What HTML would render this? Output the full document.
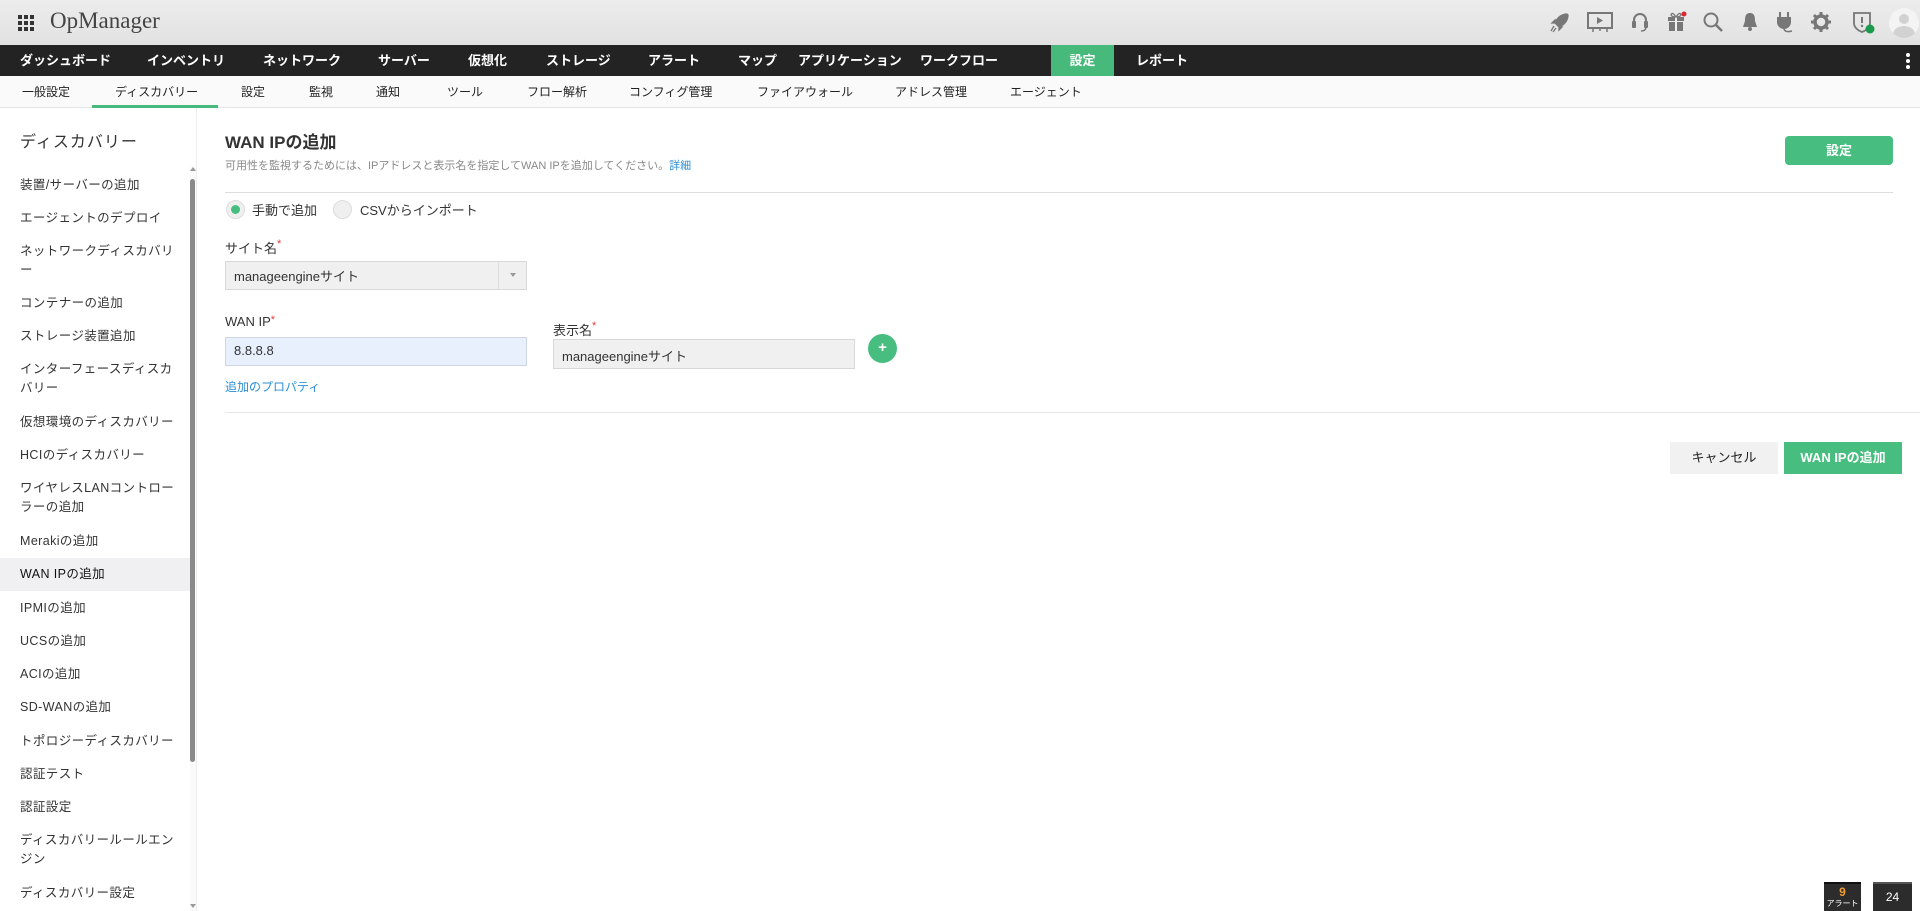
<!DOCTYPE html>
<html><head><meta charset="utf-8"><style>
*{box-sizing:border-box;margin:0;padding:0}
body{width:1920px;height:911px;overflow:hidden;background:#fff;font-family:"Liberation Sans","Noto Sans CJK JP",sans-serif;position:relative;color:#333}
.a{position:absolute;white-space:nowrap}
#hdr{left:0;top:0;width:1920px;height:45px;background:linear-gradient(#ececec,#e2e2e2)}
#nav{left:0;top:45px;width:1920px;height:31px;background:#232323}
#nav span{position:absolute;top:0;line-height:31px;color:#fff;font-size:13px;font-weight:bold}
#sub{left:0;top:76px;width:1920px;height:32px;background:#fafafa;border-bottom:1px solid #e6e6e6}
#sub span{position:absolute;top:0;line-height:32px;font-size:12px;color:#222}
.si{position:absolute;left:20px;font-size:12.5px;letter-spacing:0.4px;color:#333;line-height:19px;white-space:nowrap}
.lbl{font-size:13px;color:#333}
.req{color:#e53b3b;font-size:11px;vertical-align:top}
.ic{position:absolute;top:11px}
</style></head><body>
<div class="a" id="hdr"></div>
<svg class="a" style="left:18px;top:15px" width="16" height="16"><g fill="#333"><rect x="0" y="0" width="4" height="4"/><rect x="6" y="0" width="4" height="4"/><rect x="12" y="0" width="4" height="4"/><rect x="0" y="6" width="4" height="4"/><rect x="6" y="6" width="4" height="4"/><rect x="12" y="6" width="4" height="4"/><rect x="0" y="12" width="4" height="4"/><rect x="6" y="12" width="4" height="4"/><rect x="12" y="12" width="4" height="4"/></g></svg>
<div class="a" style="left:50px;top:8px;font-family:'Liberation Serif',serif;font-size:23px;color:#444">OpManager</div>
<svg class="ic" style="left:1549px" width="22" height="22" viewBox="0 0 22 22"><path d="M18 3 C12 3 8 7 6 12 L10 16 C15 14 19 10 19 4Z M6 12 L3 12 L6 9Z M10 16 L10 19 L13 16Z M5 15 L2 20 M7 17 L4 21" fill="#777" stroke="#777" stroke-width="1.3"/></svg>
<svg class="ic" style="left:1587px" width="26" height="24" viewBox="0 0 26 24"><rect x="1" y="2" width="24" height="15" fill="none" stroke="#777" stroke-width="2"/><path d="M10 6 L16 9.5 L10 13Z" fill="#777"/><path d="M6 17 V21 M20 17 V21 M13 17 V20" stroke="#777" stroke-width="1.5"/></svg>
<svg class="ic" style="left:1630px" width="20" height="22" viewBox="0 0 20 22"><path d="M4 12 V9 A6 6 0 0 1 16 9 V12" fill="none" stroke="#777" stroke-width="2"/><rect x="2" y="10" width="4" height="7" rx="1" fill="#777"/><rect x="14" y="10" width="4" height="7" rx="1" fill="#777"/><path d="M16 17 Q15 20 11 20" fill="none" stroke="#777" stroke-width="1.5"/></svg>
<svg class="ic" style="left:1666px;top:9px" width="22" height="24" viewBox="0 0 22 24"><rect x="2" y="8" width="16" height="4" fill="#777"/><rect x="3" y="13" width="14" height="9" fill="#777"/><path d="M10 8 V22" stroke="#eee" stroke-width="2"/><path d="M10 8 Q6 2 5 6 Q6 8 10 8 Q14 2 15 6 Q14 8 10 8" fill="none" stroke="#777" stroke-width="1.3"/><circle cx="18" cy="5" r="2.5" fill="#e0242b"/></svg>
<svg class="ic" style="left:1702px" width="22" height="22" viewBox="0 0 22 22"><circle cx="9" cy="9" r="6.5" fill="none" stroke="#777" stroke-width="2"/><path d="M14 14 L20 20" stroke="#777" stroke-width="2.5"/></svg>
<svg class="ic" style="left:1740px" width="20" height="22" viewBox="0 0 20 22"><path d="M10 2 C5 2 5 7 5 10 L3 16 H17 L15 10 C15 7 15 2 10 2Z" fill="#777"/><circle cx="10" cy="18" r="2" fill="#777"/></svg>
<svg class="ic" style="left:1774px" width="22" height="24" viewBox="0 0 22 24"><path d="M6 1 V6 M14 1 V6" stroke="#777" stroke-width="2"/><path d="M3 6 H17 V11 A7 7 0 0 1 3 11Z" fill="#777"/><path d="M10 17 Q10 22 18 20" fill="none" stroke="#777" stroke-width="1.5"/></svg>
<svg class="ic" style="left:1810px" width="22" height="22" viewBox="0 0 22 22"><circle cx="11" cy="11" r="6" fill="none" stroke="#777" stroke-width="3.5"/><g stroke="#777" stroke-width="3"><path d="M11 1 V5 M11 17 V21 M1 11 H5 M17 11 H21 M4 4 L7 7 M15 15 L18 18 M18 4 L15 7 M7 15 L4 18"/></g></svg>
<svg class="ic" style="left:1851px;top:10px" width="26" height="26" viewBox="0 0 26 26"><path d="M3 3 H19 V13 C19 18 14 21 11 22 C8 21 3 18 3 13Z" fill="none" stroke="#777" stroke-width="1.8"/><path d="M11 7 V13" stroke="#777" stroke-width="2"/><circle cx="11" cy="16" r="1.2" fill="#777"/><circle cx="19" cy="19" r="4.5" fill="#1a9b4b"/></svg>
<div class="a" style="left:1889px;top:8px;width:30px;height:30px;border-radius:50%;background:#f4f4f4;overflow:hidden"><div class="a" style="left:10px;top:6px;width:10px;height:10px;border-radius:50%;background:#d2d2d2"></div><div class="a" style="left:4px;top:18px;width:22px;height:16px;border-radius:50%;background:#d2d2d2"></div></div>

<div class="a" id="nav">
<span style="left:20px">ダッシュボード</span><span style="left:147px">インベントリ</span><span style="left:263px">ネットワーク</span><span style="left:378px">サーバー</span><span style="left:468px">仮想化</span><span style="left:546px">ストレージ</span><span style="left:648px">アラート</span><span style="left:738px">マップ</span><span style="left:798px">アプリケーション</span><span style="left:920px">ワークフロー</span>
<span style="left:1051px;width:63px;background:#47b97a;text-align:center">設定</span><span style="left:1136px">レポート</span>
<div class="a" style="left:1906px;top:8px;width:4px;height:4px;border-radius:50%;background:#fff"></div><div class="a" style="left:1906px;top:14px;width:4px;height:4px;border-radius:50%;background:#fff"></div><div class="a" style="left:1906px;top:20px;width:4px;height:4px;border-radius:50%;background:#fff"></div>
</div>
<div class="a" id="sub">
<span style="left:22px">一般設定</span><span style="left:115px">ディスカバリー</span><span style="left:241px">設定</span><span style="left:309px">監視</span><span style="left:376px">通知</span><span style="left:447px">ツール</span><span style="left:527px">フロー解析</span><span style="left:629px">コンフィグ管理</span><span style="left:757px">ファイアウォール</span><span style="left:895px">アドレス管理</span><span style="left:1010px">エージェント</span>
<div class="a" style="left:92px;top:29px;width:126px;height:3px;background:#47b97a"></div>
</div>

<div class="a" style="left:20px;top:128px;font-size:16px;letter-spacing:1px;color:#333">ディスカバリー</div>
<div class="a" style="left:0;top:558px;width:190px;height:33px;background:#f0f0f2"></div>
<div class="si" style="top:176px">装置/サーバーの追加</div>
<div class="si" style="top:209px">エージェントのデプロイ</div>
<div class="si" style="top:242px">ネットワークディスカバリ<br>ー</div>
<div class="si" style="top:294px">コンテナーの追加</div>
<div class="si" style="top:327px">ストレージ装置追加</div>
<div class="si" style="top:360px">インターフェースディスカ<br>バリー</div>
<div class="si" style="top:413px">仮想環境のディスカバリー</div>
<div class="si" style="top:446px">HCIのディスカバリー</div>
<div class="si" style="top:479px">ワイヤレスLANコントロー<br>ラーの追加</div>
<div class="si" style="top:532px">Merakiの追加</div>
<div class="si" style="top:565px;color:#111">WAN IPの追加</div>
<div class="si" style="top:599px">IPMIの追加</div>
<div class="si" style="top:632px">UCSの追加</div>
<div class="si" style="top:665px">ACIの追加</div>
<div class="si" style="top:698px">SD-WANの追加</div>
<div class="si" style="top:732px">トポロジーディスカバリー</div>
<div class="si" style="top:765px">認証テスト</div>
<div class="si" style="top:798px">認証設定</div>
<div class="si" style="top:831px">ディスカバリールールエン<br>ジン</div>
<div class="si" style="top:884px">ディスカバリー設定</div>
<div class="a" style="left:190px;top:167px;width:6px;height:744px;background:#fafafa"></div>
<div class="a" style="left:190px;top:179px;width:5px;height:583px;border-radius:3px;background:#8a8a8a"></div>
<div class="a" style="left:190px;top:167px;width:0;height:0;border-left:3px solid transparent;border-right:3px solid transparent;border-bottom:4px solid #999"></div>
<div class="a" style="left:190px;top:904px;width:0;height:0;border-left:3px solid transparent;border-right:3px solid transparent;border-top:4px solid #999"></div>
<div class="a" style="left:196px;top:108px;width:1px;height:803px;background:#eee"></div>

<div class="a" style="left:225px;top:128px;font-size:17px;font-weight:bold;color:#333">WAN IPの追加</div>
<div class="a" style="left:225px;top:157px;font-size:11px;color:#888">可用性を監視するためには、IPアドレスと表示名を指定してWAN IPを追加してください。<span style="color:#2c8fd6">詳細</span></div>
<div class="a" style="left:1785px;top:136px;width:108px;height:29px;border-radius:4px;background:#47bd7f;color:#fff;font-size:13px;font-weight:bold;text-align:center;line-height:29px">設定</div>
<div class="a" style="left:225px;top:192px;width:1668px;height:1px;background:#ddd"></div>
<div class="a" style="left:226px;top:200px;width:19px;height:19px;border-radius:50%;background:#efefef;border:1px solid #ddd"></div>
<div class="a" style="left:231px;top:205px;width:9px;height:9px;border-radius:50%;background:#47bd7f"></div>
<div class="a lbl" style="left:252px;top:200px">手動で追加</div>
<div class="a" style="left:333px;top:200px;width:19px;height:19px;border-radius:50%;background:#efefef;border:1px solid #ddd"></div>
<div class="a lbl" style="left:360px;top:200px">CSVからインポート</div>
<div class="a lbl" style="left:225px;top:238px">サイト名<span class="req">*</span></div>
<div class="a" style="left:225px;top:261px;width:302px;height:29px;background:#f0f0f0;border:1px solid #d8d8d8"></div>
<div class="a" style="left:498px;top:262px;width:1px;height:27px;background:#ddd"></div>
<div class="a" style="left:510px;top:273px;border-left:3px solid transparent;border-right:3px solid transparent;border-top:4px solid #999"></div>
<div class="a" style="left:234px;top:266px;font-size:13px;color:#333">manageengineサイト</div>
<div class="a lbl" style="left:225px;top:314px">WAN IP<span class="req">*</span></div>
<div class="a" style="left:225px;top:337px;width:302px;height:29px;background:#e8f0fe;border:1px solid #cfd6e0"></div>
<div class="a" style="left:234px;top:343px;font-size:13px;color:#333">8.8.8.8</div>
<div class="a lbl" style="left:553px;top:320px">表示名<span class="req">*</span></div>
<div class="a" style="left:553px;top:339px;width:302px;height:30px;background:#f0f0f0;border:1px solid #d8d8d8"></div>
<div class="a" style="left:562px;top:346px;font-size:13px;color:#333">manageengineサイト</div>
<div class="a" style="left:868px;top:334px;width:29px;height:29px;border-radius:50%;background:#47bd7f;color:#fff;font-size:15px;font-weight:bold;text-align:center;line-height:28px">+</div>
<div class="a" style="left:225px;top:378px;font-size:12px;color:#2c8fd6">追加のプロパティ</div>
<div class="a" style="left:225px;top:412px;width:1695px;height:1px;background:#e6e6e6"></div>
<div class="a" style="left:1670px;top:442px;width:108px;height:32px;background:#f1f1f1;font-size:13px;color:#222;text-align:center;line-height:32px">キャンセル</div>
<div class="a" style="left:1784px;top:442px;width:118px;height:32px;background:#47bd7f;font-size:13px;font-weight:bold;color:#fff;text-align:center;line-height:32px">WAN IPの追加</div>

<div class="a" style="left:1824px;top:882px;width:37px;height:29px;background:#2c2c2c;border-top:2px solid #111;text-align:center;line-height:11px"><div style="color:#f39c32;font-size:12px;font-weight:bold;margin-top:3px">9</div><div style="color:#fff;font-size:8px">アラート</div></div>
<div class="a" style="left:1873px;top:882px;width:39px;height:29px;background:#2c2c2c;border-top:2px solid #555;color:#fff;font-size:12px;text-align:center;line-height:26px">24</div>
</body></html>
